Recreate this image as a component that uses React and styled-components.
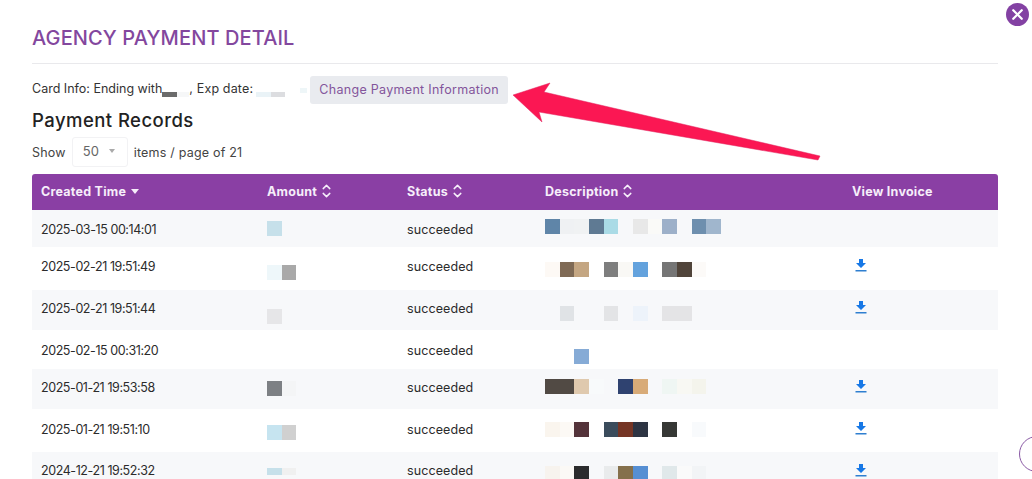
import React from "react"
import styled, { createGlobalStyle } from "styled-components"
import { LuX } from "react-icons/lu"

const GlobalStyle = createGlobalStyle`
  html, body {
    margin: 0;
    height: 479px;
    overflow: hidden;
    background: #fff;
  }
  body {
    font-family: "Inter", "Open Sans", sans-serif;
    color: #222;
  }
`

const Page = styled.div`
  position: relative;
  height: 479px;
  overflow: hidden;
  padding: 25px 34px 0 32px;
  box-sizing: border-box;
`
const Title = styled.h2`
  margin: 0;
  height: 38px;
  border-bottom: 1px solid #e9e9ec;
  color: #83479e;
  font-size: 20px;
  line-height: 27px;
  font-weight: 500;
  letter-spacing: 0.12px;
`
const CardRow = styled.div`
  display: flex;
  align-items: center;
  height: 28px;
  margin-top: 12px;
  font-size: 12.5px;
  color: #333;
`
const CardLabel = styled.span`
  padding-bottom: 3px;
  letter-spacing: ${({ $spacing }) => $spacing || 0}px;
`
const Redacted = styled.span`
  display: flex;
  align-self: flex-end;
  margin: 0 0 7px ${({ $left }) => $left || 0}px;
  width: ${({ $width }) => $width}px;
`
const RedactedBit = styled.span`
  width: ${({ $width }) => $width}px;
  height: 5px;
  background: ${({ $color }) => $color};
`
const ChangeButton = styled.button`
  margin-left: ${({ $left }) => $left}px;
  width: 198px;
  height: 28px;
  padding: 0 0 2px;
  border: 0;
  border-radius: 3px;
  background: #e9ebef;
  color: #83559b;
  font-family: inherit;
  font-size: 12.5px;
  letter-spacing: 0.3px;
`
const SectionTitle = styled.h3`
  margin: 3px 0 0;
  font-size: 18.5px;
  line-height: 27px;
  font-weight: 500;
  letter-spacing: 0.45px;
  color: #222;
`
const ShowRow = styled.div`
  display: flex;
  align-items: center;
  height: 30px;
  margin-top: 3px;
  font-size: 12.5px;
  letter-spacing: 0.2px;
  color: #444;
`
const PageSelect = styled.div`
  display: flex;
  align-items: center;
  justify-content: space-between;
  box-sizing: border-box;
  width: 56px;
  height: 30px;
  margin: 0 6px;
  padding: 0 12px 2px 10px;
  border: 1px solid #f2f2f4;
  border-radius: 3px;
  color: #666;
  font-size: 13px;
`
const Caret = styled.span`
  width: 0;
  height: 0;
  border-left: ${({ $size }) => $size || 3.5}px solid transparent;
  border-right: ${({ $size }) => $size || 3.5}px solid transparent;
  border-top: ${({ $size }) => ($size || 3.5) + 0.5}px solid ${({ $color }) => $color || "#aaa"};
`
const Table = styled.table`
  width: 966px;
  margin-top: 7px;
  border-collapse: collapse;
  table-layout: fixed;
  font-size: 12.5px;
`
const HeadRow = styled.tr`
  height: 36px;
  background: #8a3fa4;
`
const Head = styled.th`
  width: ${({ $width }) => $width}px;
  padding: 0 9px 2px;
  box-sizing: border-box;
  color: #f6eefa;
  font-size: 12.5px;
  font-weight: 700;
  letter-spacing: 0.25px;
  text-align: left;
  white-space: nowrap;
  &:first-child {
    border-radius: 3px 0 0 0;
  }
  &:last-child {
    border-radius: 0 3px 0 0;
  }
`
const HeadInner = styled.span`
  display: inline-flex;
  align-items: center;
  gap: 5px;
`
const Row = styled.tr`
  height: ${({ $height }) => $height}px;
  background: ${({ $striped }) => ($striped ? "#f7f8fa" : "#fff")};
`
const Cell = styled.td`
  padding: ${({ $top }) => $top}px 9px 0;
  vertical-align: top;
  color: #2b2b2b;
  line-height: 16px;
  letter-spacing: 0.1px;
  white-space: nowrap;
`
const TimeCell = styled(Cell)`
  letter-spacing: -0.42px;
`
const Mosaic = styled.div`
  display: flex;
`
const Tile = styled.span`
  flex: none;
  width: 14.67px;
  height: ${({ $height }) => $height || 15}px;
  background: ${({ $color }) => $color || "transparent"};
`
const Close = styled.div`
  position: absolute;
  top: 3px;
  right: 3px;
  width: 23px;
  height: 23px;
  display: flex;
  align-items: center;
  justify-content: center;
  border-radius: 50%;
  background: #8341a3;
  color: #fff;
`
const ChatBubble = styled.div`
  position: absolute;
  left: 1019px;
  top: 436px;
  width: 36px;
  height: 36px;
  box-sizing: border-box;
  border: 1px solid #8a5aa5;
  border-radius: 50%;
  background: #fff;
`
const ArrowSvg = styled.svg`
  position: absolute;
  left: 500px;
  top: 70px;
`

const SortIcon = () => (
  <svg width="9" height="14" viewBox="0 0 9 14" fill="none" stroke="#f6eefa" strokeWidth="1.5" strokeLinecap="round" strokeLinejoin="round">
    <path d="M1.2 4.6 4.5 1.4 7.8 4.6" />
    <path d="M1.2 9.4 4.5 12.6 7.8 9.4" />
  </svg>
)

const DownloadIcon = () => (
  <svg width="12" height="13" viewBox="0 0 12 13" style={{ display: "block", marginLeft: 3 }}>
    <path d="M4 0h4v4h3L6 9 1 4h3z" fill="#1778e6" />
    <rect x="0.5" y="11" width="11" height="1.5" fill="#2f7fd0" />
  </svg>
)

const records = [
  {
    time: "2025-03-15 00:14:01", height: 37, top: 12, amountTop: 11, descTop: 9, iconTop: 0,
    amount: ["#c6e0ea"],
    desc: ["#5f85a8", "#eff1f3", "#f0f2f3", "#5f7a93", "#aadbe6", null, "#e8e8e8", "#fafaf8", "#9db0c9", null, "#6e8fae", "#a0b6cd"],
  },
  {
    time: "2025-02-21 19:51:49", height: 43, top: 12, amountTop: 18, descTop: 15, iconTop: 12,
    amount: ["#eef7fa", "#a9a9a9"],
    desc: ["#fdf9f5", "#7f6a55", "#c4a682", null, "#7e7e7e", "#f9f8f5", "#63a2dd", null, "#757575", "#50443a", "#fcfaf8"],
  },
  {
    time: "2025-02-21 19:51:44", height: 40, top: 11, amountTop: 19, descTop: 16, iconTop: 11,
    amount: ["#e6e6e8"],
    desc: [null, "#e0e3e6", null, null, "#e3e4e6", null, "#edf3fa", null, "#e4e4e6", "#e4e4e6"],
  },
  {
    time: "2025-02-15 00:31:20", height: 39, top: 13, amountTop: 0, descTop: 19, iconTop: 0,
    amount: [],
    desc: [null, null, "#86abd6"],
  },
  {
    time: "2025-01-21 19:53:58", height: 40, top: 11, amountTop: 12, descTop: 10, iconTop: 11,
    amount: ["#7d8084", "#f4f5f6"],
    desc: ["#514a44", "#514a44", "#dfc9ae", "#f8fafb", null, "#2f4270", "#d8ab78", null, "#eff6f3", "#f8f8f3", "#f4f4ec"],
  },
  {
    time: "2025-01-21 19:51:10", height: 43, top: 13, amountTop: 16, descTop: 13, iconTop: 13,
    amount: ["#c6e4f0", "#d0d0d0"],
    desc: ["#faf5ee", "#fcf9f5", "#54333a", null, "#3b4c5c", "#753525", "#2d3443", null, "#363835", null, "#f8fafc"],
  },
  {
    time: "2024-12-21 19:52:32", height: 40, top: 11, amountTop: 16, descTop: 14, iconTop: 12, amountHeight: 7,
    amount: ["#c6e0ea", "#f0f0f0"],
    desc: ["#f7f3ee", "#fbf9f6", "#2b2b2d", null, "#e9ebec", "#85704c", "#568fd3", null, "#e0e8ea", "#fafafa", "#f2f4f6"],
  },
]

const App = () => (
  <Page>
    <GlobalStyle />
    <Close>
      <LuX size={17} strokeWidth={3.2} />
    </Close>
    <Title>AGENCY PAYMENT DETAIL</Title>
    <CardRow>
      <CardLabel>Card Info: Ending with</CardLabel>
      <Redacted $width={27}>
        <RedactedBit $width={15} $color="#6b6b6b" />
        <RedactedBit $width={12} $color="#f6f7f8" />
      </Redacted>
      <CardLabel $spacing={0.15}>, Exp date:</CardLabel>
      <Redacted $left={3} $width={44}>
        <RedactedBit $width={15} $color="#eaf3f7" />
        <RedactedBit $width={14} $color="#dcdde0" />
        <RedactedBit $width={15} $color="#fff" />
      </Redacted>
      <RedactedBit $width={7} $color="#eef6f8" />
      <ChangeButton $left={3}>Change Payment Information</ChangeButton>
    </CardRow>
    <SectionTitle>Payment Records</SectionTitle>
    <ShowRow>
      Show
      <PageSelect>
        50
        <Caret />
      </PageSelect>
      items / page of 21
    </ShowRow>
    <Table>
      <thead>
        <HeadRow>
          <Head $width={226}>
            <HeadInner>
              Created Time
              <Caret $size={4.5} $color="#f6eefa" />
            </HeadInner>
          </Head>
          <Head $width={140}>
            <HeadInner>
              Amount
              <SortIcon />
            </HeadInner>
          </Head>
          <Head $width={138}>
            <HeadInner>
              Status
              <SortIcon />
            </HeadInner>
          </Head>
          <Head $width={307}>
            <HeadInner>
              Description
              <SortIcon />
            </HeadInner>
          </Head>
          <Head $width={155}>View Invoice</Head>
        </HeadRow>
      </thead>
      <tbody>
        {records.map((record, index) => (
          <Row key={record.time} $height={record.height} $striped={index % 2 === 0}>
            <TimeCell $top={record.top}>{record.time}</TimeCell>
            <Cell $top={record.amountTop}>
              <Mosaic>
                {record.amount.map((color, i) => (
                  <Tile key={i} $color={color} $height={record.amountHeight} />
                ))}
              </Mosaic>
            </Cell>
            <Cell $top={record.top}>succeeded</Cell>
            <Cell $top={record.descTop}>
              <Mosaic>
                {record.desc.map((color, i) => (
                  <Tile key={i} $color={color} />
                ))}
              </Mosaic>
            </Cell>
            <Cell $top={record.iconTop}>{record.iconTop > 0 && <DownloadIcon />}</Cell>
          </Row>
        ))}
      </tbody>
    </Table>
    <ArrowSvg width="330" height="100" viewBox="500 70 330 100">
      <path
        d="M513 95 L550 83 L544 92 L820 156 L818 160 L539 112 L542 122 Z"
        fill="#fb1753"
        stroke="#e0245e"
        strokeWidth="0.5"
        strokeLinejoin="round"
      />
    </ArrowSvg>
    <ChatBubble />
  </Page>
)

export default App
